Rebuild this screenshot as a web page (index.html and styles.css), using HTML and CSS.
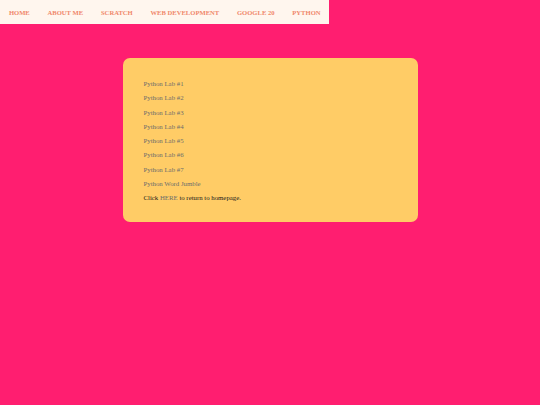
FILE: index.html
```html
<!DOCTYPE html>
<html>
<head>
<meta charset="utf-8">
<link rel="stylesheet" href="styles.css">
</head>
<body>
<nav class="nav">
  <a class="nav-item">HOME</a>
  <a class="nav-item">ABOUT ME</a>
  <a class="nav-item">SCRATCH</a>
  <a class="nav-item">WEB DEVELOPMENT</a>
  <a class="nav-item">GOOGLE 20</a>
  <a class="nav-item">PYTHON</a>
</nav>
<main class="card">
  <p class="line"><a class="link">Python Lab #1</a></p>
  <p class="line"><a class="link">Python Lab #2</a></p>
  <p class="line"><a class="link">Python Lab #3</a></p>
  <p class="line"><a class="link">Python Lab #4</a></p>
  <p class="line"><a class="link">Python Lab #5</a></p>
  <p class="line"><a class="link">Python Lab #6</a></p>
  <p class="line"><a class="link">Python Lab #7</a></p>
  <p class="line"><a class="link">Python Word Jumble</a></p>
  <p class="line">Click <a class="link">HERE</a> to return to homepage.</p>
</main>
</body>
</html>
```
FILE: styles.css
```css
html, body {
  margin: 0;
  padding: 0;
}
body {
  background: #ff1e70;
  font-family: "Liberation Serif", "Times New Roman", serif;
  width: 540px;
  height: 405px;
  overflow: hidden;
}
.nav {
  display: flex;
  width: fit-content;
  height: 24px;
  align-items: center;
  background: #fff6ee;
}
.nav-item {
  padding: 0 8.9px;
  font-size: 6.6px;
  font-weight: bold;
  color: #f0876a;
  white-space: nowrap;
}
.card {
  width: 295px;
  margin: 34px auto 0;
  box-sizing: border-box;
  padding: 19px 21px 17px 21px;
  background: #ffcc66;
  border-radius: 7px;
}
.line {
  margin: 0;
  font-size: 6.8px;
  line-height: 14.25px;
  color: #1a1a1a;
}
.link {
  color: #6c6c6c;
}
```
